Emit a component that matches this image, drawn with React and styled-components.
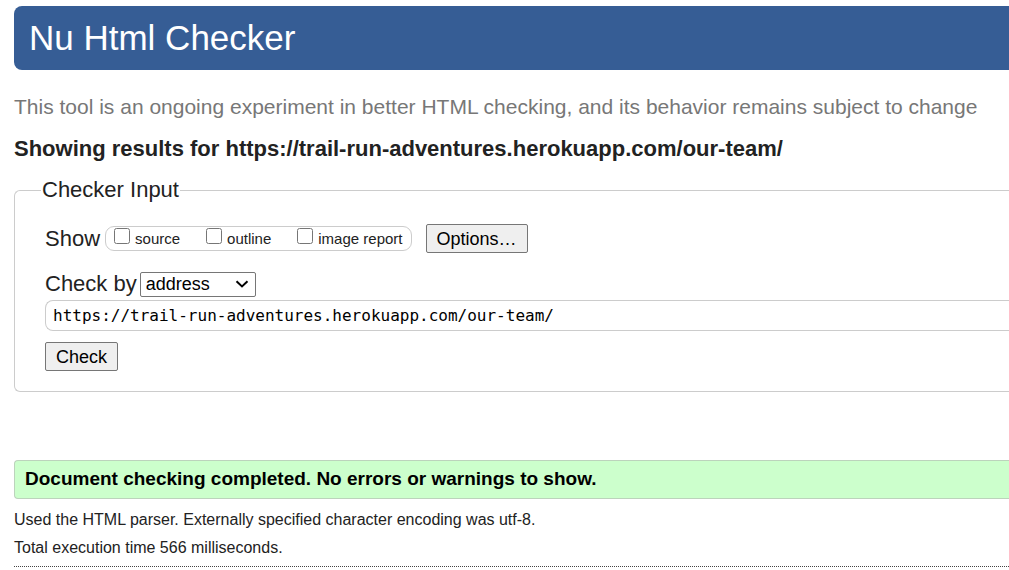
import React from "react";
import styled, { createGlobalStyle } from "styled-components";

const GlobalStyle = createGlobalStyle`
  *, *::before, *::after { box-sizing: border-box; }
  body {
    margin: 0;
    background: #fff;
    color: #222;
    font-family: "Liberation Sans", Arial, sans-serif;
    font-size: 16px;
  }
`;

const Page = styled.div`
  padding: 6px 0 0 14px;
  overflow-x: hidden;
`;

const Banner = styled.header`
  padding: 12px 15px;
  background: #365d95;
  border-radius: 8px 0 0 8px;
`;

const Title = styled.h1`
  margin: 0;
  color: #fff;
  font-size: 35px;
  font-weight: 400;
  line-height: 40px;
`;

const Notice = styled.p`
  margin: 24px 0 0;
  color: #777;
  font-size: 21px;
  line-height: 26px;
`;

const ResultsHeading = styled.h2`
  margin: 16px 0 0;
  font-size: 22px;
  font-weight: 700;
  line-height: 26px;
`;

const Fieldset = styled.fieldset`
  min-width: 0;
  margin: 15px 0 0;
  padding: 21px 0 20px 30px;
  border: 1px solid #ccc;
  border-right: 0;
  border-radius: 6px 0 0 6px;
`;

const Legend = styled.legend`
  margin-left: -4px;
  padding: 0 1px;
  font-size: 22px;
  line-height: 26px;
`;

const Row = styled.div`
  display: flex;
  align-items: center;
  margin-top: ${({ $gap }) => $gap || 0}px;
  font-size: 22px;
  line-height: 26px;
`;

const OptionGroup = styled.div`
  display: flex;
  align-items: center;
  gap: 26px;
  height: 25px;
  margin: 0 14px 0 5px;
  padding: 0 8px;
  border: 1px solid #ccc;
  border-radius: 9px;
`;

const OptionLabel = styled.label`
  display: flex;
  align-items: flex-start;
  gap: 5px;
  font-size: 15px;
  line-height: 24px;
`;

const Checkbox = styled.input`
  width: 16px;
  height: 16px;
  margin: 1px 0 0;
`;

const Button = styled.button`
  height: 29px;
  padding: 0 10px;
  border: 1px solid #767676;
  border-radius: 2px;
  background: #efefef;
  color: #000;
  font-family: inherit;
  font-size: 18px;
  line-height: 26px;
`;

const SelectWrap = styled.div`
  display: grid;
  align-items: center;
  margin-left: 3px;

  > * { grid-area: 1 / 1; }
`;

const Select = styled.select`
  appearance: none;
  width: 116px;
  height: 25px;
  padding: 0 5px;
  border: 1px solid #767676;
  border-radius: 2px;
  background: #fff;
  color: #000;
  font-family: inherit;
  font-size: 18px;
`;

const Chevron = styled.svg`
  justify-self: end;
  width: 14px;
  height: 10px;
  margin-right: 7px;
  pointer-events: none;
`;

const AddressInput = styled.input`
  display: block;
  width: 100%;
  height: 31px;
  margin: 3px 0 11px;
  padding: 0 7px;
  border: 1px solid #ccc;
  border-right: 0;
  border-radius: 8px 0 0 8px;
  background: #fff;
  color: #000;
  font-family: Consolas, "DejaVu Sans Mono", monospace;
  font-size: 16px;
`;

const Success = styled.p`
  margin: 68px 0 0;
  padding: 5px 10px 7px;
  border: 1px solid #bcd3bc;
  border-right: 0;
  border-radius: 4px 0 0 4px;
  background: #cfc;
  color: #000;
  font-size: 19px;
  font-weight: 700;
  line-height: 25px;
`;

const Details = styled.div`
  padding: 7px 0 4px;
  border-bottom: 1px dotted #444;
`;

const Detail = styled.p`
  margin: 0;
  font-size: 16px;
  line-height: 28px;
`;

const outputs = ["source", "outline", "image report"];

export default function App() {
  return (
    <>
      <GlobalStyle />
      <Page>
        <Banner>
          <Title>Nu Html Checker</Title>
        </Banner>
        <main>
          <Notice>
            This tool is an ongoing experiment in better HTML checking, and its behavior remains subject to change
          </Notice>
          <ResultsHeading>
            Showing results for https://trail-run-adventures.herokuapp.com/our-team/
          </ResultsHeading>
          <form onSubmit={(event) => event.preventDefault()}>
            <Fieldset>
              <Legend>Checker Input</Legend>
              <Row>
                <span>Show</span>
                <OptionGroup>
                  {outputs.map((name) => (
                    <OptionLabel key={name}>
                      <Checkbox type="checkbox" name={name} />
                      <span>{name}</span>
                    </OptionLabel>
                  ))}
                </OptionGroup>
                <Button type="button">Options…</Button>
              </Row>
              <Row $gap={18}>
                <label htmlFor="method">Check by</label>
                <SelectWrap>
                  <Select id="method" defaultValue="address">
                    <option value="address">address</option>
                    <option value="upload">file upload</option>
                    <option value="text">text input</option>
                  </Select>
                  <Chevron viewBox="0 0 14 10" aria-hidden="true">
                    <path d="M1.5 2.2 7 7.4l5.500-5.200" fill="none" stroke="#000" strokeWidth="2" />
                  </Chevron>
                </SelectWrap>
              </Row>
              <AddressInput
                type="url"
                aria-label="Address"
                defaultValue="https://trail-run-adventures.herokuapp.com/our-team/"
              />
              <Button type="submit">Check</Button>
            </Fieldset>
          </form>
          <Success>Document checking completed. No errors or warnings to show.</Success>
          <Details>
            <Detail>Used the HTML parser. Externally specified character encoding was utf-8.</Detail>
            <Detail>Total execution time 566 milliseconds.</Detail>
          </Details>
        </main>
      </Page>
    </>
  );
}
